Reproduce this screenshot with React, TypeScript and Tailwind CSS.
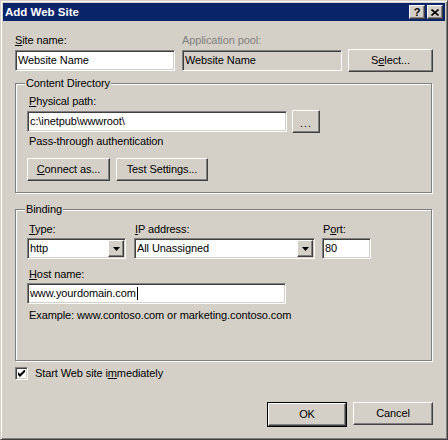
import React from "react";

const raised =
  "border border-t-white border-l-white border-b-[#404040] border-r-[#404040] bg-[#d4d0c8] shadow-[inset_-1px_-1px_0_#808080]";
const sunken =
  "border border-t-[#808080] border-l-[#808080] border-b-white border-r-white shadow-[inset_1px_1px_0_#404040,inset_-1px_-1px_0_#d4d0c8]";

function Button({
  className = "",
  children,
}: {
  className?: string;
  children?: React.ReactNode;
}) {
  return (
    <div className={`flex h-[23px] items-center justify-center ${raised} ${className}`}>
      {children}
    </div>
  );
}

function Field({
  className = "",
  disabled,
  children,
}: {
  className?: string;
  disabled?: boolean;
  children?: React.ReactNode;
}) {
  return (
    <div
      className={`flex h-[21px] items-center pl-[2px] ${sunken} ${
        disabled ? "bg-[#d4d0c8]" : "bg-white"
      } ${className}`}
    >
      {children}
    </div>
  );
}

function Combo({ value, className = "" }: { value: string; className?: string }) {
  return (
    <div className={`flex h-[21px] items-center justify-between bg-white pl-[2px] pr-[1px] ${sunken} ${className}`}>
      <span>{value}</span>
      <div className={`flex h-[17px] w-[16px] items-center justify-center ${raised}`}>
        <svg width="7" height="4" viewBox="0 0 7 4">
          <path d="M0 0h7L3.5 4z" fill="#000" />
        </svg>
      </div>
    </div>
  );
}

function Group({
  label,
  className = "",
  children,
}: {
  label: string;
  className?: string;
  children?: React.ReactNode;
}) {
  return (
    <div
      className={`relative border border-[#808080] shadow-[1px_1px_0_#fff,inset_1px_1px_0_#fff] ${className}`}
    >
      <span className="absolute left-[9px] top-[-7px] bg-[#d4d0c8] px-[1px] leading-[13px]">
        {label}
      </span>
      {children}
    </div>
  );
}

export default function App() {
  return (
    <div className="flex h-[440px] w-[448px] flex-col border border-t-[#d4d0c8] border-l-[#d4d0c8] border-b-[#404040] border-r-[#404040] bg-[#d4d0c8] p-[2px] font-['Liberation_Sans',Arial,sans-serif] text-[11px] leading-[13px] tracking-[-0.1px] text-black shadow-[inset_1px_1px_0_#fff,inset_-1px_-1px_0_#808080]">
      {/* title bar */}
      <div className="flex h-[18px] items-center justify-between bg-[#0a246a] pl-[2px] pr-[2px]">
        <span className="text-[11.5px] font-bold tracking-normal text-white">Add Web Site</span>
        <div className="flex gap-[2px]">
          <div className={`flex h-[14px] w-[16px] items-center justify-center ${raised}`}>
            <span className="text-[11px] font-bold leading-none">?</span>
          </div>
          <div className={`flex h-[14px] w-[16px] items-center justify-center ${raised}`}>
            <svg width="8" height="7" viewBox="0 0 8 7">
              <path d="M0.5 0.5l7 6M7.5 0.5l-7 6" stroke="#000" strokeWidth="1.6" />
            </svg>
          </div>
        </div>
      </div>

      <div className="flex flex-col px-[12px]">
        {/* site name row */}
        <div className="mt-[13px] flex items-start">
          <div className="flex w-[160px] flex-col">
            <span>
              <u>S</u>ite name:
            </span>
            <Field className="mt-[3px]">Website Name</Field>
          </div>
          <div className="ml-[7px] flex w-[160px] flex-col">
            <span className="text-[#808080]">Application pool:</span>
            <Field disabled className="mt-[3px]">
              Website Name
            </Field>
          </div>
          <Button className="ml-[6px] mt-[15px] w-[85px]">
            <span>
              S<u>e</u>lect...
            </span>
          </Button>
        </div>

        {/* content directory */}
        <Group label="Content Directory" className="mt-[11px] h-[110px] w-[417px]">
          <div className="flex flex-col pl-[11px] pt-[11px]">
            <span className="pl-[2px]">
              <u>P</u>hysical path:
            </span>
            <div className="mt-[2px] flex items-center">
              <Field className="w-[260px]">c:\inetpub\wwwroot\</Field>
              <Button className="ml-[5px] w-[28px]">
                <span className="pt-[3px] tracking-[1px]">...</span>
              </Button>
            </div>
            <span className="mt-[2px] pl-[2px]">Pass-through authentication</span>
            <div className="mt-[10px] flex gap-[6px]">
              <Button className="w-[83px]">
                <span>
                  <u>C</u>onnect as...
                </span>
              </Button>
              <Button className="w-[92px]">
                <span>
                  Test Settin<u>g</u>s...
                </span>
              </Button>
            </div>
          </div>
        </Group>

        {/* binding */}
        <Group label="Binding" className="mt-[16px] h-[152px] w-[417px]">
          <div className="flex flex-col pl-[11px] pt-[13px]">
            <div className="flex">
              <div className="flex w-[99px] flex-col">
                <span className="pl-[2px]">
                  <u>T</u>ype:
                </span>
                <Combo value="http" className="mt-[2px]" />
              </div>
              <div className="ml-[8px] flex w-[181px] flex-col">
                <span className="pl-[1px]">
                  <u>I</u>P address:
                </span>
                <Combo value="All Unassigned" className="mt-[2px]" />
              </div>
              <div className="ml-[7px] flex w-[49px] flex-col">
                <span className="pl-[1px]">
                  P<u>o</u>rt:
                </span>
                <Field className="mt-[2px]">80</Field>
              </div>
            </div>
            <span className="mt-[9px] pl-[2px]">
              <u>H</u>ost name:
            </span>
            <Field className="mt-[2px] w-[259px]">
              www.yourdomain.com
              <span className="ml-[1px] inline-block h-[13px] w-[1px] bg-black" />
            </Field>
            <span className="mt-[5px] pl-[2px]">
              Example: www.contoso.com or marketing.contoso.com
            </span>
          </div>
        </Group>

        {/* start checkbox */}
        <div className="mt-[6px] flex items-center">
          <div className={`flex h-[13px] w-[13px] items-center justify-center bg-white ${sunken}`}>
            <svg width="7" height="7" viewBox="0 0 7 7">
              <path d="M0 2v3l2 2 5-5V-1L2 4z" fill="#000" />
            </svg>
          </div>
          <span className="ml-[7px]">
            Start Web site i<u>m</u>mediately
          </span>
        </div>

        {/* ok / cancel */}
        <div className="mt-[22px] flex justify-end gap-[6px]">
          <div className="border border-black">
            <Button className="h-[21px] w-[78px]">OK</Button>
          </div>
          <Button className="w-[80px]">Cancel</Button>
        </div>
      </div>
    </div>
  );
}
